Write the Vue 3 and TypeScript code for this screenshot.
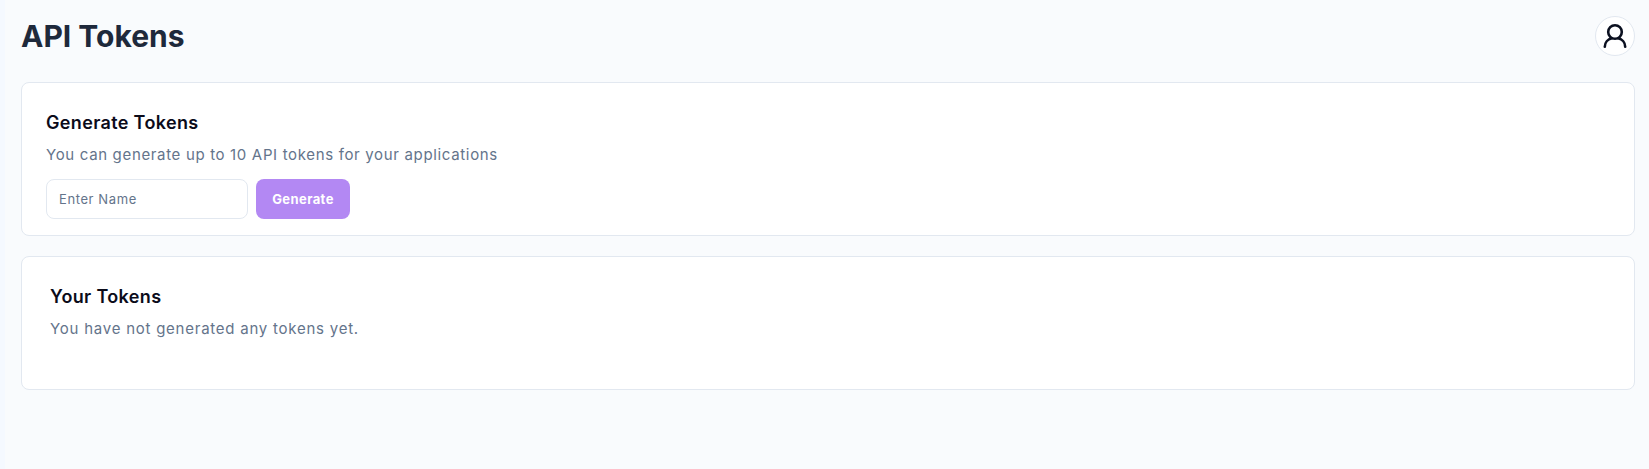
<script setup lang="ts">
const title: string = 'API Tokens'
</script>

<template>
  <div class="shell">
    <aside class="rail"></aside>
    <main class="main">
      <header class="top">
        <h1>{{ title }}</h1>
        <button class="avatar" aria-label="Account">
          <svg width="28" height="28" viewBox="0 0 28 28" fill="none" stroke="#0b1020" stroke-width="2.6" stroke-linecap="round">
            <circle cx="14" cy="10" r="6.800" />
            <path d="M3.800 24.800c0-4.200 3-7.600 7-8.500M24.200 24.800c0-4.200-3-7.600-7-8.500" />
          </svg>
        </button>
      </header>
      <section class="card first">
        <h2>Generate Tokens</h2>
        <p>You can generate up to 10 API tokens for your applications</p>
        <div class="form">
          <input class="name" type="text" placeholder="Enter Name" />
          <button class="generate">Generate</button>
        </div>
      </section>
      <section class="card second">
        <h2>Your Tokens</h2>
        <p class="empty">You have not generated any tokens yet.</p>
      </section>
    </main>
  </div>
</template>

<style>
html, body { margin: 0; background: #f9fbfd; }
</style>

<style scoped>
.shell {
  display: flex;
  height: 469px;
  overflow: hidden;
  background: #f9fbfd;
  font-family: Inter, "Liberation Sans", sans-serif;
}
.rail { width: 5px; flex: none; background: #f5f9ff; }
.main { flex: 1; min-width: 0; padding: 16px 14px 0 16px; }
.top {
  display: flex;
  align-items: center;
  justify-content: space-between;
  height: 40px;
  margin-bottom: 26px;
}
h1 {
  margin: 0;
  font-size: 30px;
  line-height: 40px;
  font-weight: 700;
  color: #1e293b;
  letter-spacing: 0;
}
.avatar {
  width: 40px;
  height: 40px;
  padding: 0;
  border: 1px solid #e2e8f0;
  border-radius: 50%;
  background: #fff;
  display: flex;
  align-items: center;
  justify-content: center;
}
.card {
  box-sizing: border-box;
  background: #fff;
  border: 1px solid #e2e8f0;
  border-radius: 8px;
}
.first { height: 154px; padding: 28px 24px 0; margin-bottom: 20px; }
.second { height: 134px; padding: 28px 28px 0; }
h2 {
  margin: 0;
  font-size: 18px;
  line-height: 24px;
  font-weight: 600;
  color: #0b0b1a;
  letter-spacing: 0.35px;
}
p {
  margin: 8px 0 0;
  font-size: 15px;
  line-height: 24px;
  color: #64748b;
  letter-spacing: 0.66px;
}
.empty { letter-spacing: 0.76px; }
.form { display: flex; gap: 8px; margin-top: 12px; }
.name {
  box-sizing: border-box;
  width: 202px;
  height: 40px;
  padding: 0 12px;
  border: 1px solid #e2e8f0;
  border-radius: 8px;
  background: #fff;
  font: inherit;
  font-size: 13px;
  letter-spacing: 0.6px;
}
.name::placeholder { color: #64748b; opacity: 1; }
.generate {
  box-sizing: border-box;
  width: 94px;
  height: 40px;
  border: 0;
  border-radius: 8px;
  background: #b388f3;
  color: #fff;
  font: inherit;
  font-size: 13px;
  font-weight: 700;
  letter-spacing: 0.4px;
}
</style>
